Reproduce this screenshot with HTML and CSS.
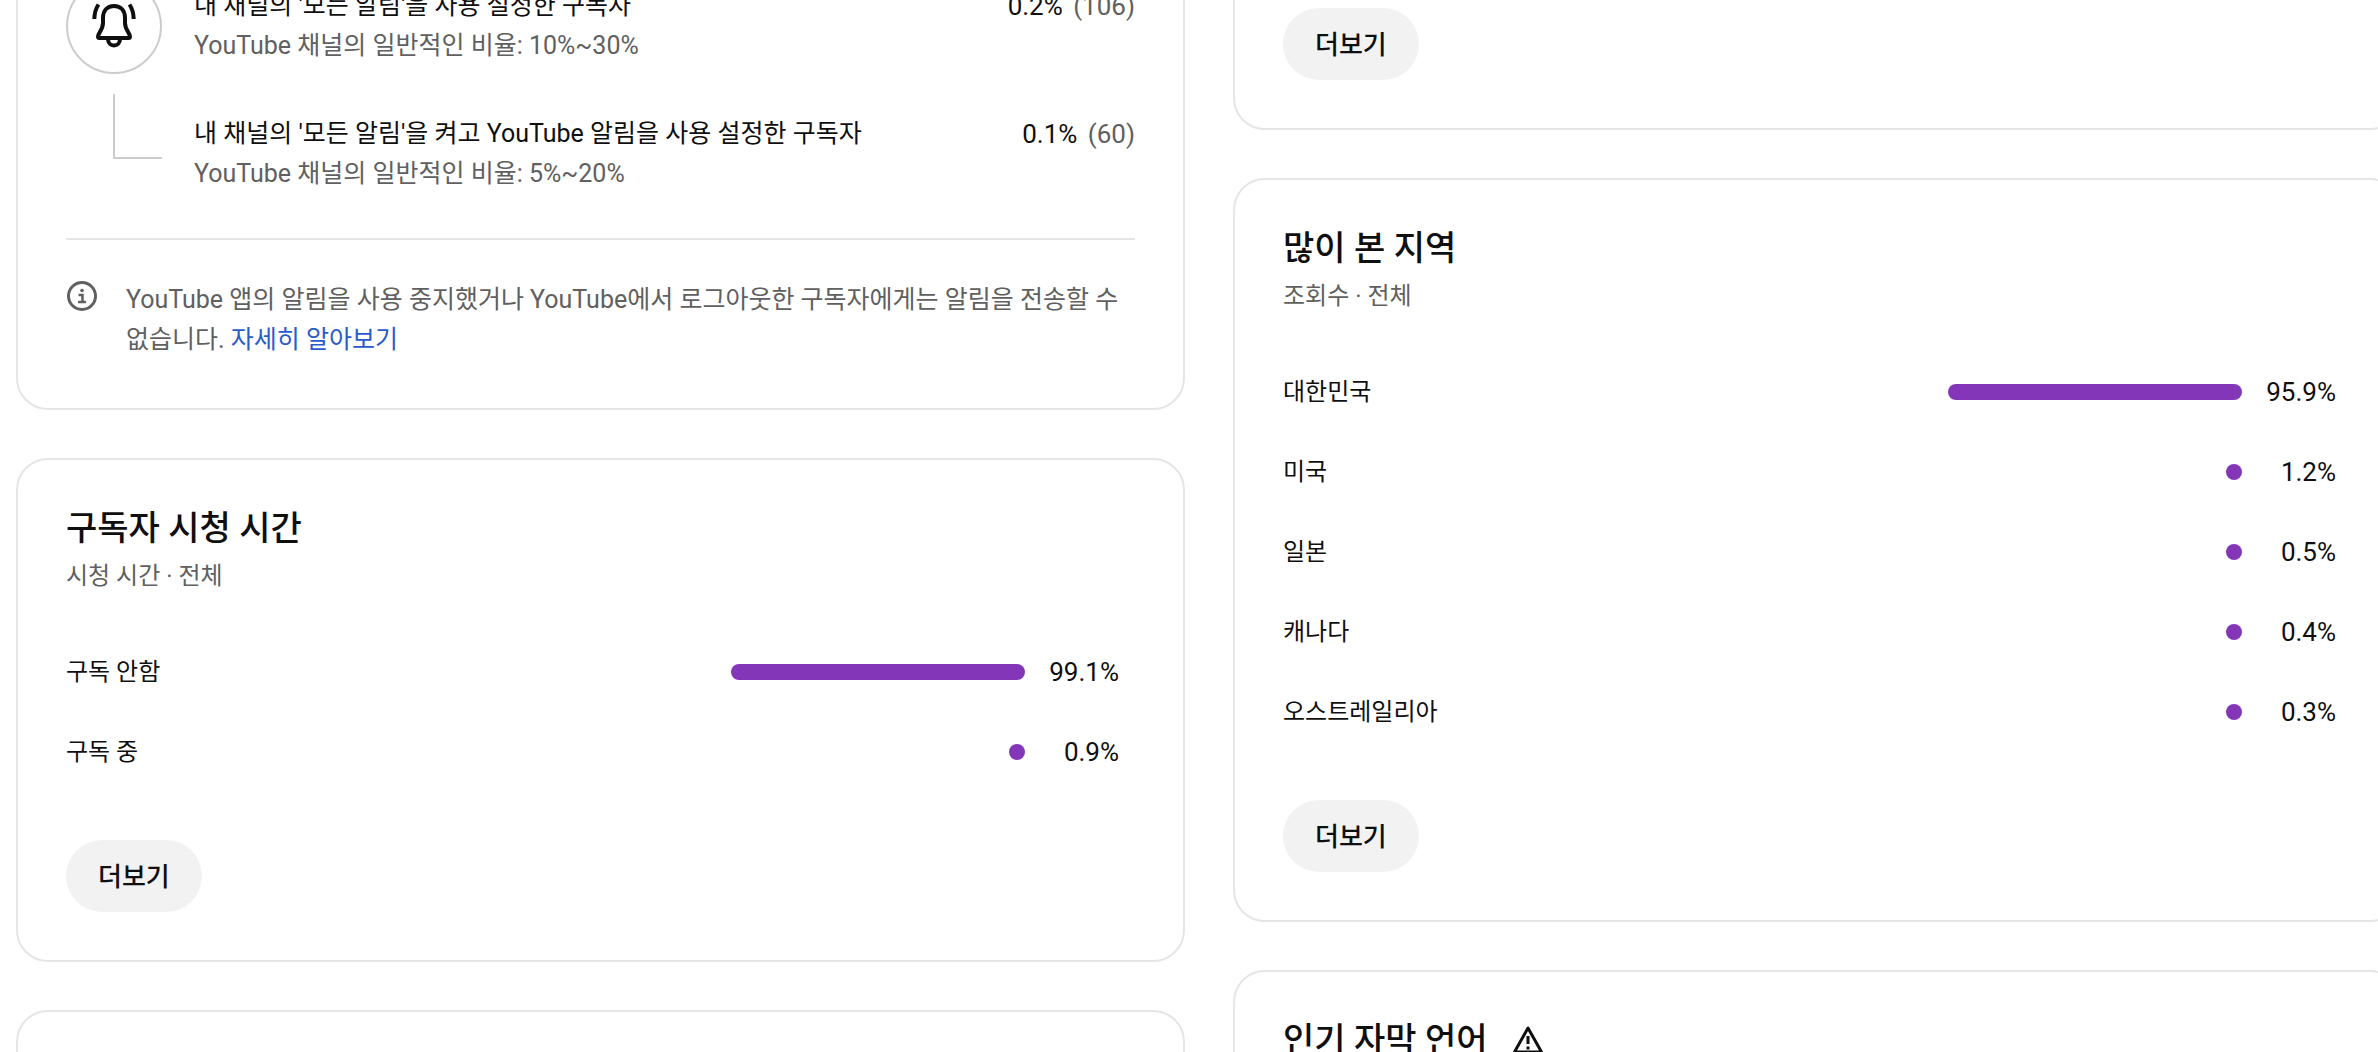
FILE: index.html
```html
<!DOCTYPE html>
<html lang="ko">
<head>
  <meta charset="UTF-8" />
  <meta name="viewport" content="width=device-width, initial-scale=1" />
  <title>채널 분석 - 시청자층</title>
  <link rel="stylesheet" href="styles.css">
</head>
<body>

<main class="dashboard">

  <!-- 왼쪽 열 -->
  <div class="column column-left">
    <section class="card">
      <div class="bell-list">
        <div class="bell-row">
          <div class="bell-circle">
            <svg viewBox="0 0 48 48" width="48" height="48" fill="none" stroke="currentColor" stroke-width="4" stroke-linejoin="round" aria-hidden="true">
              <path d="M24 4c-7 0-11 5-11 12v5c0 7-5 10-5 13.500 0 1 .6 1.500 1.500 1.500h29c.9 0 1.500-.5 1.500-1.500 0-3.500-5-6.500-5-13.500v-5c0-7-4-12-11-12z" />
              <path d="M18 37c0 4 2.500 6.500 6 6.500s6-2.500 6-6.500" />
              <path d="M8.500 2.500c-2.700 4-4 8.500-4.200 14.500M39.500 2.500c2.700 4 4 8.500 4.200 14.500" />
            </svg>
          </div>
          <div class="bell-text">
            <p>내 채널의 '모든 알림'을 사용 설정한 구독자</p>
            <p class="muted">YouTube 채널의 일반적인 비율: 10%~30%</p>
          </div>
          <p class="bell-value">0.2% <span class="muted">(106)</span></p>
        </div>
        <div class="bell-row">
          <div class="connector"></div>
          <div class="bell-text">
            <p>내 채널의 '모든 알림'을 켜고 YouTube 알림을 사용 설정한 구독자</p>
            <p class="muted">YouTube 채널의 일반적인 비율: 5%~20%</p>
          </div>
          <p class="bell-value">0.1% <span class="muted">(60)</span></p>
        </div>
      </div>
      <div class="note">
        <svg class="note-icon" viewBox="0 0 32 32" width="32" height="32" fill="none" stroke="currentColor" stroke-width="3" aria-hidden="true">
          <circle cx="16" cy="16" r="13.500" />
          <circle cx="16" cy="10.500" r="1.800" fill="currentColor" stroke="none" />
          <path d="M12.500 15h4v7M12 22h8" stroke-width="2.500" />
        </svg>
        <p>YouTube 앱의 알림을 사용 중지했거나 YouTube에서 로그아웃한 구독자에게는 알림을 전송할 수 없습니다. <a href="#">자세히 알아보기</a></p>
      </div>
    </section>

    <section class="card">
      <h2>구독자 시청 시간</h2>
      <p class="subtitle">시청 시간 · 전체</p>
      <ul class="bar-list">
        <li><span class="label">구독 안함</span><span class="track"><span class="bar" style="width: 100%"></span></span><span class="value">99.1%</span></li>
        <li><span class="label">구독 중</span><span class="track"><span class="bar" style="width: 0.9%"></span></span><span class="value">0.9%</span></li>
      </ul>
      <button type="button" class="more-btn">더보기</button>
    </section>

    <section class="card card-next"></section>
  </div>

  <!-- 오른쪽 열 -->
  <div class="column column-right">
    <section class="card">
      <button type="button" class="more-btn">더보기</button>
    </section>

    <section class="card">
      <h2>많이 본 지역</h2>
      <p class="subtitle">조회수 · 전체</p>
      <ul class="bar-list">
        <li><span class="label">대한민국</span><span class="track"><span class="bar" style="width: 100%"></span></span><span class="value">95.9%</span></li>
        <li><span class="label">미국</span><span class="track"><span class="bar" style="width: 1.2%"></span></span><span class="value">1.2%</span></li>
        <li><span class="label">일본</span><span class="track"><span class="bar" style="width: 0.5%"></span></span><span class="value">0.5%</span></li>
        <li><span class="label">캐나다</span><span class="track"><span class="bar" style="width: 0.4%"></span></span><span class="value">0.4%</span></li>
        <li><span class="label">오스트레일리아</span><span class="track"><span class="bar" style="width: 0.3%"></span></span><span class="value">0.3%</span></li>
      </ul>
      <button type="button" class="more-btn">더보기</button>
    </section>

    <section class="card card-next">
      <h2>인기 자막 언어
        <svg viewBox="0 0 32 32" width="32" height="32" fill="none" stroke="currentColor" stroke-width="3" aria-hidden="true">
          <path d="M16 4L2.500 28h27z" stroke-linejoin="round" />
          <path d="M16 12v8M16 22.500v3" />
        </svg>
      </h2>
    </section>
  </div>

</main>

</body>
</html>
```
FILE: styles.css
```css
/* Reset */
* {
  margin: 0; padding: 0; box-sizing: border-box;
}

body {
  background: #fff;
  color: #0f0f0f;
  font-family: Roboto, 'Noto Sans CJK KR', sans-serif;
  font-size: 25px;
  line-height: 40px;
  overflow: hidden;
}

/* 2열 레이아웃 */
.dashboard {
  display: grid;
  grid-template-columns: 1fr 1fr;
  gap: 48px;
  height: 100vh;
  margin: 0 -24px 0 16px;
  overflow: hidden;
}

.column {
  display: flex;
  flex-direction: column;
  gap: 48px;
}

/* 스크롤된 위치 */
.column-left {
  margin-top: -72px;
}

.column-right {
  margin-top: -42px;
}

.card {
  border: 2px solid #e5e5e5;
  border-radius: 32px;
  padding: 48px;
}

.card-next {
  min-height: 240px;
}

h2 {
  display: flex;
  align-items: center;
  gap: 24px;
  font-size: 34px;
  font-weight: 500;
  line-height: 40px;
}

.muted, .subtitle {
  color: #606060;
}

.subtitle {
  margin: 8px 0 36px;
  font-size: 24px;
}

/* 알림 */
.bell-list {
  display: flex;
  flex-direction: column;
  gap: 32px;
  margin-bottom: 36px;
}

.bell-row {
  display: flex;
  align-items: flex-start;
  height: 96px;
}

.bell-circle {
  display: flex;
  align-items: center;
  justify-content: center;
  width: 96px;
  height: 96px;
  border: 2px solid #ccc;
  border-radius: 50%;
}

/* 위쪽 원에서 이어지는 선 */
.connector {
  width: 49px;
  height: 65px;
  margin: -12px 0 0 47px;
  border-left: 2px solid #ccc;
  border-bottom: 2px solid #ccc;
}

.bell-text {
  flex: 1;
  margin-left: 32px;
  padding-top: 8px;
}

.bell-value {
  padding-top: 8px;
  font-size: 26px;
}

.bell-value .muted {
  margin-left: 4px;
}

.note {
  display: flex;
  align-items: flex-start;
  gap: 28px;
  padding-top: 40px;
  border-top: 2px solid #e5e5e5;
  color: #606060;
}

.note-icon {
  flex-shrink: 0;
}

.note a {
  color: #2a5bcb;
  text-decoration: none;
}

/* 막대 목록 */
.bar-list {
  list-style: none;
  margin-bottom: 48px;
}

.bar-list li {
  display: flex;
  align-items: center;
  height: 80px;
  padding-right: 16px;
}

.label {
  flex: 1;
  font-size: 24px;
}

.track {
  display: flex;
  justify-content: flex-end;
  width: 294px;
}

.bar {
  min-width: 16px;
  height: 16px;
  border-radius: 8px;
  background: #8436b8;
}

.value {
  width: 94px;
  font-size: 26px;
  text-align: right;
}

.more-btn {
  display: block;
  height: 72px;
  padding: 0 32px 4px;
  border: none;
  border-radius: 36px;
  background: #f2f2f2;
  color: #0f0f0f;
  font-family: inherit;
  font-size: 26px;
  font-weight: 500;
  cursor: pointer;
}

.more-btn:hover {
  background: #e5e5e5;
}
```
